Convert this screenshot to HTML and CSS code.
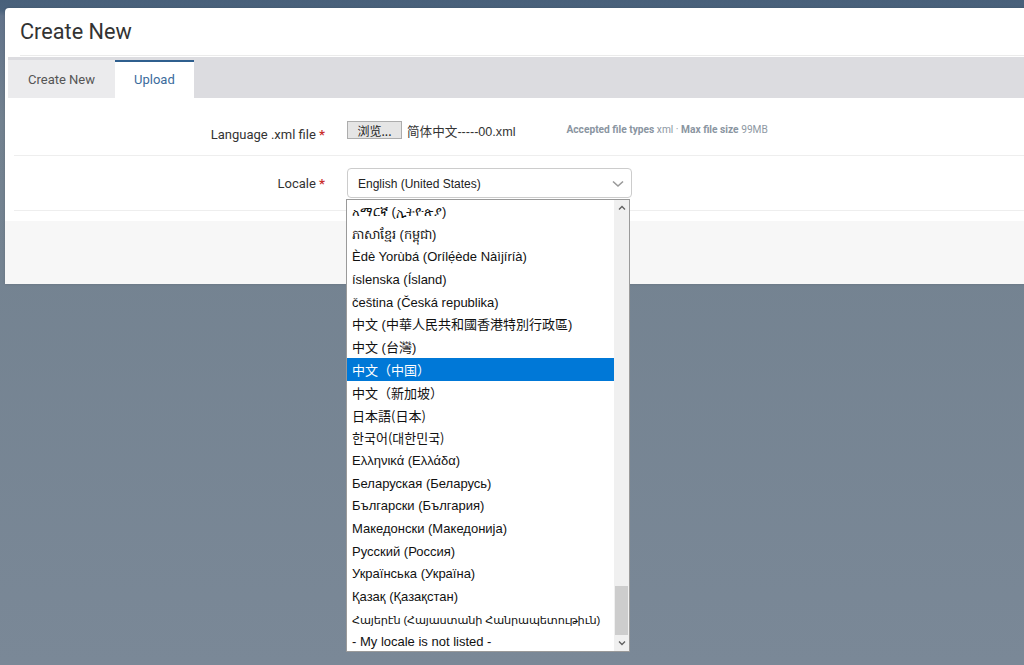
FILE: index.html
```html
<!DOCTYPE html>
<html lang="en">
<head>
<meta charset="utf-8">
<title>Create New</title>
<link rel="stylesheet" href="styles.css">
</head>
<body>
<div class="backdrop">
  <div class="modal">
    <div class="modal-header">
      <div class="modal-header-inner"><h2 class="modal-title">Create New</h2></div>
    </div>
    <div class="tabs">
      <div class="tab">Create New</div>
      <div class="tab tab-active">Upload</div>
    </div>
    <div class="modal-body">
      <div class="form-row form-row-file">
        <label class="form-label">Language .xml file <span class="req">*</span></label>
        <div class="form-control file-control">
          <span class="file-btn">浏览...</span>
          <span class="file-name">简体中文-----00.xml</span>
          <span class="help"><b>Accepted file types</b> xml · <b>Max file size</b> 99MB</span>
        </div>
      </div>
      <div class="form-row form-row-locale">
        <label class="form-label">Locale <span class="req">*</span></label>
        <div class="form-control">
          <div class="select-wrap">
            <div class="select">
              <span class="select-value">English (United States)</span>
              <svg class="chev" width="12" height="8" viewBox="0 0 12 8"><path d="M1 1.5 L6 6 L11 1.5" fill="none" stroke="#999" stroke-width="1.6"/></svg>
            </div>
            <div class="dropdown">
              <ul class="options">
                <li class="opt">አማርኛ (ኢትዮጵያ)</li>
                <li class="opt">ភាសាខ្មែរ (កម្ពុជា)</li>
                <li class="opt">Èdè Yorùbá (Orílẹ́ède Nàìjíríà)</li>
                <li class="opt">íslenska (Ísland)</li>
                <li class="opt">čeština (Česká republika)</li>
                <li class="opt cjk-tc">中文 (中華人民共和國香港特別行政區)</li>
                <li class="opt cjk-tc">中文 (台灣)</li>
                <li class="opt cjk-sc opt-selected">中文（中国）</li>
                <li class="opt cjk-sc">中文（新加坡）</li>
                <li class="opt cjk-jp">日本語(日本)</li>
                <li class="opt cjk-kr">한국어(대한민국)</li>
                <li class="opt">Ελληνικά (Ελλάδα)</li>
                <li class="opt">Беларуская (Беларусь)</li>
                <li class="opt">Български (България)</li>
                <li class="opt">Македонски (Македонија)</li>
                <li class="opt">Русский (Россия)</li>
                <li class="opt">Українська (Україна)</li>
                <li class="opt">Қазақ (Қазақстан)</li>
                <li class="opt opt-hy">Հայերէն (Հայաստանի Հանրապետութիւն)</li>
                <li class="opt">- My locale is not listed -</li>
              </ul>
              <div class="scrollbar">
                <div class="sb-btn"><svg width="8" height="6" viewBox="0 0 8 6"><path d="M1 4.5 L4 1.5 L7 4.5" fill="none" stroke="#606060" stroke-width="1.3"/></svg></div>
                <div class="sb-track"><div class="sb-thumb"></div></div>
                <div class="sb-btn"><svg width="8" height="6" viewBox="0 0 8 6"><path d="M1 1.5 L4 4.5 L7 1.5" fill="none" stroke="#606060" stroke-width="1.3"/></svg></div>
              </div>
            </div>
          </div>
        </div>
      </div>
    </div>
    <div class="modal-footer"></div>
  </div>
</div>
</body>
</html>
```

FILE: styles.css
```css
* { box-sizing: border-box; }
html, body { margin: 0; padding: 0; }
body {
  width: 1024px;
  height: 665px;
  overflow: hidden;
  font-family: Roboto, "Liberation Sans", "Noto Sans CJK SC", sans-serif;
  background: linear-gradient(to bottom, #48607a 0, #4a627c 10px, #62738a 16px, #72818f 120px, #7a8897 665px);
}
.backdrop {
  padding: 8px 0 0 5px;
  height: 665px;
}
.modal {
  width: 1030px;
  background: #fff;
  border-radius: 4px 0 0 0;
  box-shadow: 0 0 3px rgba(0,0,0,0.15);
}
.modal-header {
  height: 49px;
  padding: 0 0 0 15px;
}
.modal-header-inner {
  height: 48px;
  border-bottom: 1px solid #ebebeb;
  display: flex;
  align-items: center;
}
.modal-title {
  margin: 0;
  font-size: 21.7px;
  font-weight: 400;
  color: #333;
  line-height: 24px;
}
.tabs {
  margin-left: 3px;
  height: 41px;
  background: #dcdce0;
  display: flex;
  align-items: flex-end;
}
.tab {
  height: 38px;
  padding: 1px 20px 0;
  display: flex;
  align-items: center;
  font-size: 13px;
  color: #555;
  background: #ebebed;
}
.tab-active {
  background: #fff;
  color: #3b6b9c;
  border-top: 2px solid #2f5f8e;
  padding: 0 19px 1px;
}
.modal-body {
  padding: 0 0 10px 9px;
}
.form-row {
  display: grid;
  grid-template-columns: 311px 1fr;
  column-gap: 22px;
  border-bottom: 1px solid #eeeeee;
}
.form-row-file { height: 58px; padding-top: 23px; }
.form-row-locale { height: 55px; padding-top: 12px; }
.form-label {
  text-align: right;
  font-size: 13px;
  line-height: 18px;
  color: #333;
}
.form-row-file .form-label { padding-top: 5px; }
.form-row-locale .form-label { padding-top: 7px; }
.req { color: #c9302c; font-weight: 700; }
.file-control {
  display: flex;
  align-items: center;
  height: 18px;
}
.file-btn {
  height: 18px;
  width: 55px;
  display: flex;
  align-items: center;
  justify-content: center;
  background: #e5e5e5;
  border: 1px solid #adadad;
  font-family: "Noto Sans CJK SC", sans-serif;
  font-size: 12px;
  color: #222;
}
.file-name {
  margin-left: 5px;
  font-family: "Liberation Sans", "Noto Sans CJK SC", sans-serif;
  font-size: 12.6px;
  color: #333;
}
.help {
  margin-left: 51px;
  font-size: 10.2px;
  color: #8e98a3;
  margin-top: -2px;
}
.help b { font-weight: 700; color: #8a95a1; }
.select-wrap {
  position: relative;
  width: 285px;
}
.select {
  height: 30px;
  border: 1px solid #cccccc;
  border-radius: 4px;
  background: #fff;
  display: flex;
  align-items: center;
  padding: 1px 0 0 10px;
  position: relative;
}
.select-value {
  font-family: "Liberation Sans", sans-serif;
  font-size: 12px;
  color: #222;
}
.chev {
  position: absolute;
  right: 7px;
  top: 11px;
}
.dropdown {
  position: absolute;
  top: 31px;
  left: -1px;
  width: 284px;
  height: 453px;
  border: 1px solid #9a9a9a;
  background: #fff;
  display: flex;
  z-index: 10;
}
.options {
  list-style: none;
  margin: 0;
  padding: 0;
  flex: 1;
  min-width: 0;
  overflow: hidden;
}
.opt {
  height: 22.65px;
  line-height: 24.4px;
  padding-left: 5px;
  font-family: "Liberation Sans", "DejaVu Sans", "Noto Sans", "Noto Sans CJK SC", sans-serif;
  font-size: 13px;
  color: #111;
  white-space: nowrap;
  overflow: hidden;
}
.opt-hy { font-size: 11.3px; letter-spacing: -0.15px; }
.cjk-sc { font-family: "Noto Sans CJK SC", sans-serif; }
.cjk-tc { font-family: "Liberation Sans", "Noto Sans CJK TC", sans-serif; }
.cjk-jp { font-family: "Noto Sans CJK JP", sans-serif; }
.cjk-kr { font-family: "Noto Sans CJK KR", sans-serif; }
.opt-selected {
  background: #0078d7;
  color: #fff;
}
.scrollbar {
  width: 15px;
  flex: 0 0 15px;
  background: #f0f0f0;
  display: flex;
  flex-direction: column;
}
.sb-btn {
  height: 16px;
  display: flex;
  align-items: center;
  justify-content: center;
}
.sb-track {
  flex: 1;
  display: flex;
  flex-direction: column;
  justify-content: flex-end;
  padding: 0 1px;
}
.sb-thumb {
  height: 49px;
  background: #cdcdcd;
}
.modal-footer {
  height: 63px;
  background: #f7f7f7;
}
```
